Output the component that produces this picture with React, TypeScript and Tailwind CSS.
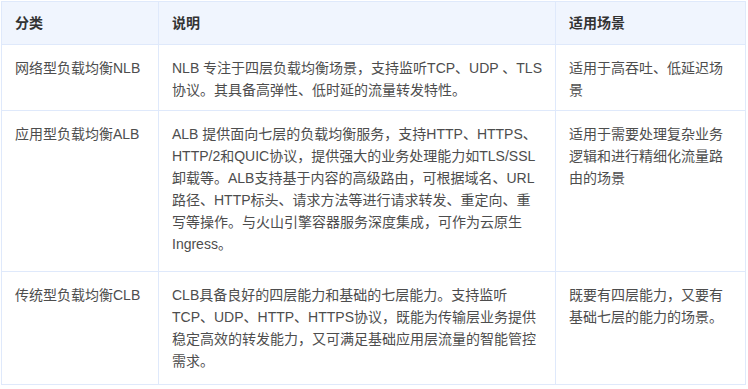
import React from "react";

const rows = [
  {
    type: "网络型负载均衡NLB",
    desc: "NLB 专注于四层负载均衡场景，支持监听TCP、UDP 、TLS 协议。其具备高弹性、低时延的流量转发特性。",
    scene: "适用于高吞吐、低延迟场景",
    pb: "pb-[9px]",
  },
  {
    type: "应用型负载均衡ALB",
    desc: "ALB 提供面向七层的负载均衡服务，支持HTTP、HTTPS、HTTP/2和QUIC协议，提供强大的业务处理能力如TLS/SSL卸载等。ALB支持基于内容的高级路由，可根据域名、URL路径、HTTP标头、请求方法等进行请求转发、重定向、重写等操作。与火山引擎容器服务深度集成，可作为云原生Ingress。",
    scene: "适用于需要处理复杂业务逻辑和进行精细化流量路由的场景",
    pb: "pb-[16px]",
  },
  {
    type: "传统型负载均衡CLB",
    desc: "CLB具备良好的四层能力和基础的七层能力。支持监听TCP、UDP、HTTP、HTTPS协议，既能为传输层业务提供稳定高效的转发能力，又可满足基础应用层流量的智能管控需求。",
    scene: "既要有四层能力，又要有基础七层的能力的场景。",
    pb: "pb-[12px]",
  },
];

export default function App() {
  return (
    <div
      className="w-[748px] h-[389px] bg-white pl-px pt-px overflow-hidden"
      style={{ fontFamily: '"Liberation Sans", "Noto Sans CJK SC", sans-serif' }}
    >
      <table className="table-fixed border-collapse w-[745px] text-[14px] leading-[22px]">
        <colgroup>
          <col className="w-[157px]" />
          <col className="w-[397px]" />
          <col className="w-[190px]" />
        </colgroup>
        <thead>
          <tr className="bg-[#f0f5fe]">
            {["分类", "说明", "适用场景"].map((h) => (
              <th
                key={h}
                className="border border-[#dfe9fb] px-[13px] py-[10px] text-left font-bold text-[#333333]"
              >
                {h}
              </th>
            ))}
          </tr>
        </thead>
        <tbody>
          {rows.map((r) => (
            <tr key={r.type} className="align-top text-[#4d4d4d]">
              <td className={`border border-[#dfe9fb] px-[13px] pt-[12px] ${r.pb}`}>{r.type}</td>
              <td className={`border border-[#dfe9fb] px-[13px] pt-[12px] ${r.pb}`}>{r.desc}</td>
              <td className={`border border-[#dfe9fb] px-[13px] pt-[12px] ${r.pb}`}>{r.scene}</td>
            </tr>
          ))}
        </tbody>
      </table>
    </div>
  );
}
